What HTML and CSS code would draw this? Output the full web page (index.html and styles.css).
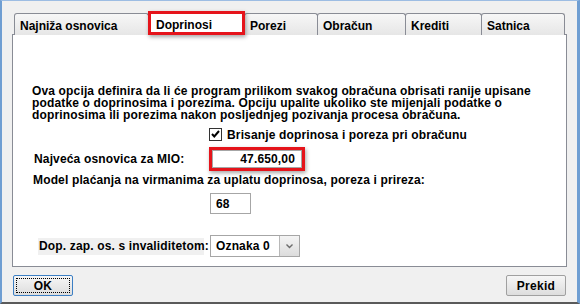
FILE: index.html
```html
<html>

<head>
    <title>
        Obračun - postavke
    </title>
    <link rel="stylesheet" href="styles.css">
</head>

<body>
    <div class="window">
        <div class="tabs">
            <div class="tab tab-najniza">Najniža osnovica</div>
            <div class="tab tab-doprinosi active">Doprinosi</div>
            <div class="tab tab-porezi">Porezi</div>
            <div class="tab tab-obracun">Obračun</div>
            <div class="tab tab-krediti">Krediti</div>
            <div class="tab tab-satnica">Satnica</div>
        </div>
        <div class="panel">
            <p class="info">Ova opcija definira da li će program prilikom svakog obračuna obrisati ranije upisane<br>
                podatke o doprinosima i porezima. Opciju upalite ukoliko ste mijenjali podatke o<br>
                doprinosima ili porezima nakon posljednjeg pozivanja procesa obračuna.</p>
            <div class="check-row">
                <span class="checkbox">
                    <svg width="11" height="11" viewBox="0 0 11 11">
                        <path d="M2 5 L4.3 7.5 L9 2" fill="none" stroke="#000" stroke-width="2"/>
                    </svg>
                </span>
                <span>Brisanje doprinosa i poreza pri obračunu</span>
            </div>
            <div class="mio-row">
                <span class="mio-label">Najveća osnovica za MIO:</span>
                <span class="marked">
                    <span class="field field-mio">47.650,00</span>
                </span>
            </div>
            <div class="model-label">Model plaćanja na virmanima za uplatu doprinosa, poreza i prireza:</div>
            <div class="model-row">
                <span class="field field-model">68</span>
            </div>
            <div class="inv-row">
                <span class="inv-label">Dop. zap. os. s invaliditetom:</span>
                <span class="combo">
                    <span class="combo-text">Oznaka 0</span>
                    <span class="combo-btn">
                        <svg width="7" height="5" viewBox="0 0 7 5">
                            <path d="M0.5 0.5 L3.5 3.5 L6.5 0.5" fill="none" stroke="#6b6b6b" stroke-width="1.4"/>
                        </svg>
                    </span>
                </span>
            </div>
        </div>
        <div class="buttons">
            <button class="btn btn-ok"><span class="focus">OK</span></button>
            <button class="btn">Prekid</button>
        </div>
    </div>
</body>

</html>
```

FILE: styles.css
```css
body {
    margin: 0;
    background-color: #f0f0f0;
    font-family: "Liberation Sans", Arial, sans-serif;
    font-weight: bold;
    font-size: 12px;
    letter-spacing: 0.15px;
    color: #000;
}

.window {
    width: 580px;
    height: 304px;
    box-sizing: border-box;
    border-left: 2px solid #6f9ed2;
    border-top: 1px solid #9dbde3;
    border-right: 3px solid #6f9ed2;
    border-bottom: 2px solid #5a5a5a;
    padding: 12px 10px 0 10px;
}

.tabs {
    display: flex;
    padding-left: 2px;
    height: 22px;
    position: relative;
    z-index: 1;
}

.tab {
    box-sizing: border-box;
    height: 22px;
    padding: 5px 0 0 5px;
    border: 1px solid #898c95;
    border-bottom: none;
    border-radius: 3px 3px 0 0;
    background: linear-gradient(#f7f7f7, #e6e6e6);
    margin-right: -1px;
    letter-spacing: 0;
    white-space: nowrap;
}

.tab-najniza { width: 135px; }
.tab-doprinosi { width: 97px; }
.tab-porezi { width: 74px; }
.tab-obracun { width: 89px; }
.tab-krediti { width: 77px; }
.tab-satnica { width: 84px; }

.tab.active {
    height: 24px;
    margin-top: -2px;
    padding: 4px 0 0 5px;
    background: #fff;
    border: 3px solid #e5141b;
    border-radius: 0;
    box-shadow: 1px 2px 4px rgba(0, 0, 0, 0.35);
    position: relative;
    z-index: 2;
}

.panel {
    height: 233px;
    box-sizing: border-box;
    background: #fff;
    border: 1px solid #898c95;
    margin-top: -1px;
    padding: 50px 0 0 19px;
}

.info {
    margin: 0;
    line-height: 12px;
    white-space: nowrap;
}

.check-row {
    display: flex;
    align-items: center;
    gap: 5px;
    margin: 7px 0 0 177px;
    height: 13px;
}

.checkbox {
    width: 13px;
    height: 13px;
    box-sizing: border-box;
    border: 1px solid #333;
    background: #fff;
    display: flex;
    align-items: center;
    justify-content: center;
}

.mio-row {
    display: flex;
    align-items: center;
    margin-top: 6px;
}

.mio-label {
    width: 175px;
    padding-left: 2px;
}

.marked {
    border: 3px solid #e5141b;
    box-shadow: 1px 2px 4px rgba(0, 0, 0, 0.35);
    display: flex;
}

.field {
    box-sizing: border-box;
    border: 1px solid #a6a6a6;
    background: #fff;
    display: flex;
    align-items: center;
}

.field-mio {
    width: 90px;
    height: 18px;
    justify-content: flex-end;
    padding-right: 6px;
}

.model-label {
    margin-top: 2px;
    padding-left: 1px;
}

.model-row {
    padding-left: 178px;
    margin-top: 6px;
}

.field-model {
    width: 41px;
    height: 21px;
    padding-left: 5px;
}

.inv-row {
    display: flex;
    align-items: center;
    margin-top: 21px;
    padding-left: 6px;
}

.inv-label {
    flex-shrink: 0;
    white-space: nowrap;
    background: #f0f0f0;
    width: 166px;
    height: 17px;
    line-height: 17px;
    padding-left: 1px;
    box-sizing: border-box;
    margin-right: 6px;
}

.combo {
    display: flex;
    width: 90px;
    height: 22px;
    box-sizing: border-box;
    border: 1px solid #a6a6a6;
    background: #fff;
}

.combo-text {
    flex: 1;
    padding-left: 5px;
    line-height: 20px;
}

.combo-btn {
    width: 19px;
    background: linear-gradient(#f4f4f4, #dcdcdc);
    border-left: 1px solid #b8b8b8;
    display: flex;
    align-items: center;
    justify-content: center;
}

.buttons {
    display: flex;
    justify-content: space-between;
    margin-top: 8px;
    padding: 0 1px;
}

.btn {
    width: 60px;
    height: 21px;
    font-family: "Liberation Sans", Arial, sans-serif;
    font-weight: bold;
    font-size: 12px;
    letter-spacing: 0.3px;
    border: 1px solid #a0a0a0;
    border-radius: 2px;
    background: linear-gradient(#f6f6f6, #dddddd);
    padding: 0;
}

.btn-ok {
    border-color: #3c7fc4;
    padding: 2px;
}

.focus {
    display: block;
    height: 100%;
    box-sizing: border-box;
    border: 1px dotted #000;
    line-height: 14px;
}
```
